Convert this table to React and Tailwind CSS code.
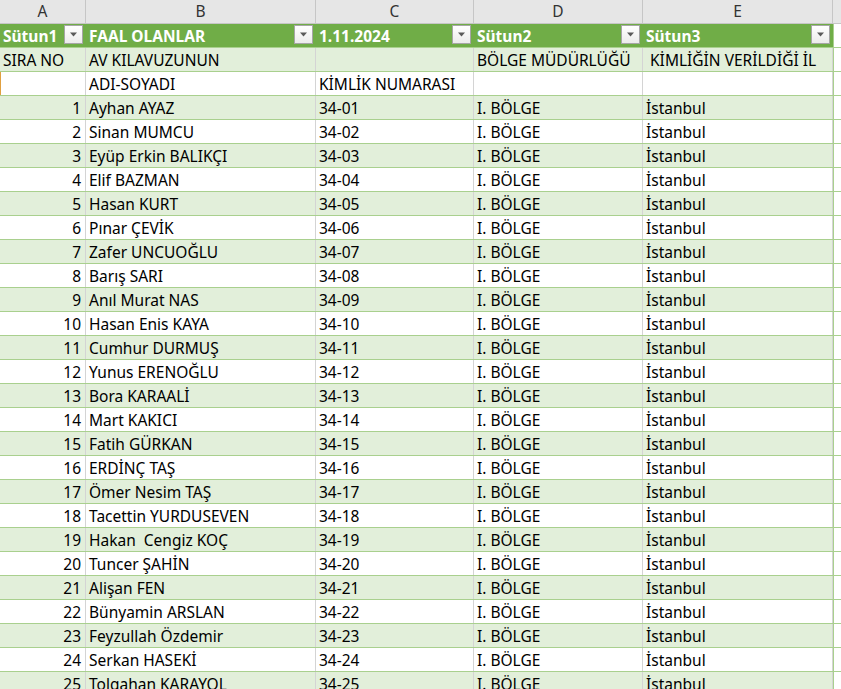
import React from 'react';

const cols = [
	{ key: 'A', w: 'w-[86px]' },
	{ key: 'B', w: 'w-[230px]' },
	{ key: 'C', w: 'w-[158px]' },
	{ key: 'D', w: 'w-[169px]' },
	{ key: 'E', w: 'w-[190px]' }
];

const people = [
	'Ayhan AYAZ',
	'Sinan MUMCU',
	'Eyüp Erkin BALIKÇI',
	'Elif BAZMAN',
	'Hasan KURT',
	'Pınar ÇEVİK',
	'Zafer UNCUOĞLU',
	'Barış SARI',
	'Anıl Murat NAS',
	'Hasan Enis KAYA',
	'Cumhur DURMUŞ',
	'Yunus ERENOĞLU',
	'Bora KARAALİ',
	'Mart KAKICI',
	'Fatih GÜRKAN',
	'ERDİNÇ TAŞ',
	'Ömer Nesim TAŞ',
	'Tacettin YURDUSEVEN',
	'Hakan  Cengiz KOÇ',
	'Tuncer ŞAHİN',
	'Alişan FEN',
	'Bünyamin ARSLAN',
	'Feyzullah Özdemir',
	'Serkan HASEKİ',
	'Tolgahan KARAYOL'
];

const FilterBtn = () => (
	<span className="mb-[1px] ml-auto mr-[2px] flex h-[19px] w-[19px] shrink-0 items-center justify-center self-center border border-[#a6a6a6] bg-gradient-to-b from-white to-[#ececec]">
		<svg width="9" height="5" viewBox="0 0 9 5">
			<path d="M1 0.5h7L4.5 4.5z" fill="#5a5a5a" />
		</svg>
	</span>
);

const Cell = ({ w, children, className = '', line = 'border-r-[#d4d4d4]' }) => (
	<div
		className={`${w} flex h-full shrink-0 items-end overflow-hidden whitespace-pre border-r ${line} px-[3px] pb-[1px] leading-[20px] ${className}`}>
		{children}
	</div>
);

const Row = ({ band, children }) => (
	<div
		className={`flex h-[24px] border-b border-[#a9d08e] ${band ? 'bg-[#e2efda]' : 'bg-white'}`}>
		{children}
		<div className="h-full flex-1 border-l border-[#a9d08e] bg-white" />
	</div>
);

export default function App() {
	return (
		<div
			className="h-[689px] w-[841px] overflow-hidden bg-white text-[15.5px] text-black"
			style={{ fontFamily: '"Noto Sans", "Open Sans", sans-serif' }}>
			{/* column letters */}
			<div className="flex h-[24px] border-b border-[#c6c6c6] bg-[#e6e6e6] text-[#333]">
				{cols.map(c => (
					<div
						key={c.key}
						className={`${c.w} flex shrink-0 items-center justify-center border-r border-[#c6c6c6]`}>
						{c.key}
					</div>
				))}
				<div className="flex-1" />
			</div>

			{/* table header */}
			<div className="flex h-[24px] border-b border-[#a9d08e] bg-[#70ad47] font-bold text-white">
				{['Sütun1', 'FAAL OLANLAR', '1.11.2024', 'Sütun2', 'Sütun3'].map((t, i) => (
					<Cell key={t} w={cols[i].w} line="border-r-[#70ad47]" className="pr-0">
						<span>{t}</span>
						<FilterBtn />
					</Cell>
				))}
				<div className="h-full flex-1 border-l border-[#a9d08e] bg-white" />
			</div>

			<Row band>
				<Cell w={cols[0].w}>SIRA NO</Cell>
				<Cell w={cols[1].w}>AV KILAVUZUNUN</Cell>
				<Cell w={cols[2].w}></Cell>
				<Cell w={cols[3].w}>BÖLGE MÜDÜRLÜĞÜ</Cell>
				<Cell w={cols[4].w}> KİMLİĞİN VERİLDİĞİ İL</Cell>
			</Row>
			<Row>
				<Cell w={cols[0].w} className="border-l border-l-[#e0a040]"></Cell>
				<Cell w={cols[1].w}>ADI-SOYADI</Cell>
				<Cell w={cols[2].w}>KİMLİK NUMARASI</Cell>
				<Cell w={cols[3].w}></Cell>
				<Cell w={cols[4].w}></Cell>
			</Row>

			{people.map((name, i) => {
				const n = i + 1;
				const id = `34-${String(n).padStart(2, '0')}`;
				return (
					<Row key={n} band={i % 2 === 0}>
						<Cell w={cols[0].w} className="justify-end pr-[4px]">
							{n}
						</Cell>
						<Cell w={cols[1].w}>{name}</Cell>
						<Cell w={cols[2].w}>{id}</Cell>
						<Cell w={cols[3].w}>I. BÖLGE</Cell>
						<Cell w={cols[4].w}>İstanbul</Cell>
					</Row>
				);
			})}
		</div>
	);
}
